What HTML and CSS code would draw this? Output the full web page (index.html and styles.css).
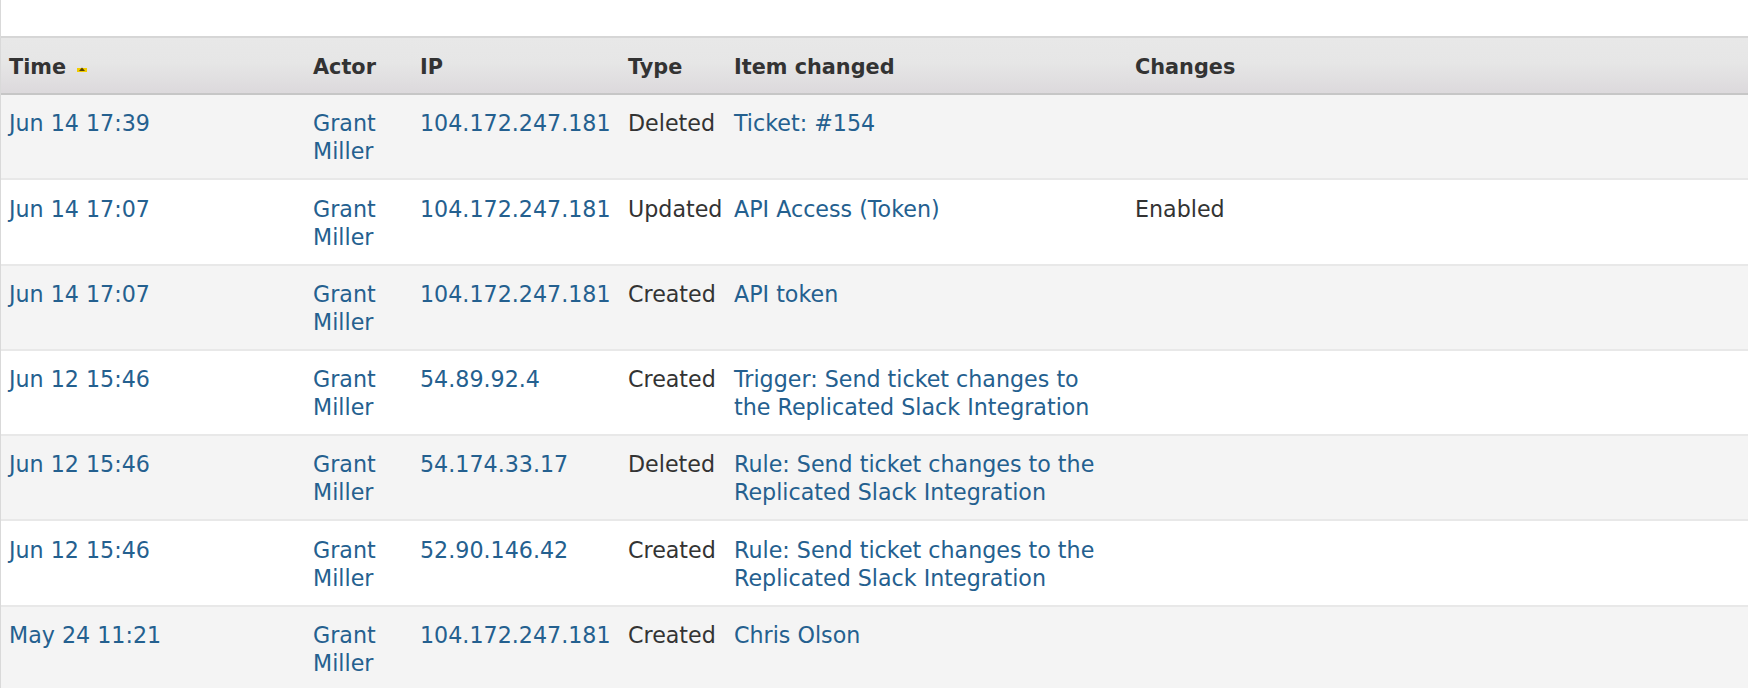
FILE: index.html
```html
<!DOCTYPE html>
<html>
<head>
<meta charset="utf-8">
<link rel="stylesheet" href="styles.css">
</head>
<body>
<div class="panel">
  <table class="audit">
    <colgroup>
      <col class="c-time"><col class="c-actor"><col class="c-ip"><col class="c-type"><col class="c-item"><col class="c-changes">
    </colgroup>
    <thead>
      <tr>
        <th>Time <svg class="sort" width="10" height="6" viewBox="0 0 10 6"><rect x="0" y="2" width="10" height="4" fill="#f2cc00"/><polygon points="2,5 5,1.5 8,5" fill="#5a4400"/></svg></th>
        <th>Actor</th>
        <th>IP</th>
        <th>Type</th>
        <th>Item changed</th>
        <th>Changes</th>
      </tr>
    </thead>
    <tbody>
      <tr class="odd">
        <td><a>Jun 14 17:39</a></td><td><a>Grant Miller</a></td><td><a>104.172.247.181</a></td><td>Deleted</td><td><a>Ticket: #154</a></td><td></td>
      </tr>
      <tr>
        <td><a>Jun 14 17:07</a></td><td><a>Grant Miller</a></td><td><a>104.172.247.181</a></td><td>Updated</td><td><a>API Access (Token)</a></td><td>Enabled</td>
      </tr>
      <tr class="odd">
        <td><a>Jun 14 17:07</a></td><td><a>Grant Miller</a></td><td><a>104.172.247.181</a></td><td>Created</td><td><a>API token</a></td><td></td>
      </tr>
      <tr>
        <td><a>Jun 12 15:46</a></td><td><a>Grant Miller</a></td><td><a>54.89.92.4</a></td><td>Created</td><td><a>Trigger: Send ticket changes to the Replicated Slack Integration</a></td><td></td>
      </tr>
      <tr class="odd">
        <td><a>Jun 12 15:46</a></td><td><a>Grant Miller</a></td><td><a>54.174.33.17</a></td><td>Deleted</td><td><a>Rule: Send ticket changes to the Replicated Slack Integration</a></td><td></td>
      </tr>
      <tr>
        <td><a>Jun 12 15:46</a></td><td><a>Grant Miller</a></td><td><a>52.90.146.42</a></td><td>Created</td><td><a>Rule: Send ticket changes to the Replicated Slack Integration</a></td><td></td>
      </tr>
      <tr class="odd">
        <td><a>May 24 11:21</a></td><td><a>Grant Miller</a></td><td><a>104.172.247.181</a></td><td>Created</td><td><a>Chris Olson</a></td><td></td>
      </tr>
    </tbody>
  </table>
</div>
</body>
</html>
```

FILE: styles.css
```css
html, body {
  margin: 0;
  padding: 0;
  background: #ffffff;
}
body {
  font-family: "DejaVu Sans", Verdana, sans-serif;
  font-size: 22.2px;
  line-height: 28px;
  color: #333333;
  overflow: hidden;
}
.panel {
  width: 1747px;
  border-left: 1px solid #d9d9d9;
  padding-top: 36px;
}
.audit {
  width: 1747px;
  table-layout: fixed;
  border-collapse: collapse;
  border-spacing: 0;
}
.c-time { width: 304px; }
.c-actor { width: 107px; }
.c-ip { width: 208px; }
.c-type { width: 106px; }
.c-item { width: 401px; }
.c-changes { width: 621px; }
.audit th {
  text-align: left;
  font-weight: bold;
  font-size: 20.8px;
  color: #333333;
  padding: 14.8px 8px 12.2px 8px;
  background: linear-gradient(#e8e8e8, #e6e6e6 45%, #dcd9dc);
  border-top: 2px solid #d6d6d6;
  border-bottom: 2px solid #c6c6c6;
  white-space: nowrap;
}
.sort {
  vertical-align: 2px;
  margin-left: 4px;
}
.audit td {
  vertical-align: top;
  padding: 14.3px 8px 13px 8px;
  border-top: 2px solid #e8e8e8;
  background: #ffffff;
}
.audit thead + tbody tr:first-child td {
  border-top: 0;
}
.audit tr.odd td {
  background: #f4f4f4;
}
.audit a {
  color: #24608f;
  text-decoration: none;
}
```
